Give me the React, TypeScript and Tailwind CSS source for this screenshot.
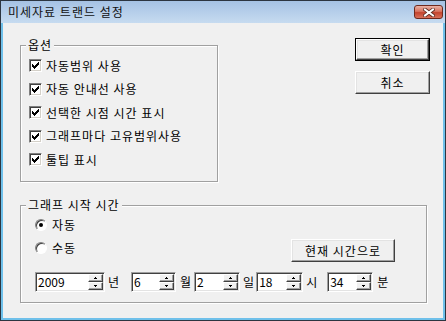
import React from "react";

const options = [
  "자동범위 사용",
  "자동 안내선 사용",
  "선택한 시점 시간 표시",
  "그래프마다 고유범위사용",
  "툴팁 표시",
];

const checkPixels: [number, number, number][] = [
  // y, x start, length
  [0, 6, 1],
  [1, 5, 2],
  [2, 0, 1],
  [2, 4, 3],
  [3, 0, 2],
  [3, 3, 3],
  [4, 0, 5],
  [5, 1, 3],
  [6, 2, 1],
];

const CheckBox = () => (
  <span className="w-[13px] h-[13px] flex-none flex items-center justify-center bg-white border border-t-[#808080] border-l-[#808080] border-r-white border-b-white shadow-[inset_1px_1px_0_#404040,inset_-1px_-1px_0_#d4d0c8]">
    <svg width="7" height="7" viewBox="0 0 7 7" shapeRendering="crispEdges">
      {checkPixels.map(([y, x, w], i) => (
        <rect key={i} x={x} y={y} width={w} height={1} fill="#000" />
      ))}
    </svg>
  </span>
);

const Radio = ({ on }: { on?: boolean }) => (
  <span className="w-[12px] h-[12px] flex-none rounded-full flex items-center justify-center bg-white border border-t-[#808080] border-l-[#808080] border-r-white border-b-white shadow-[inset_1px_1px_0_#404040]">
    {on && <span className="w-[4px] h-[4px] rounded-full bg-black" />}
  </span>
);

const Button = ({
  children,
  isDefault,
  className = "",
}: {
  children: React.ReactNode;
  isDefault?: boolean;
  className?: string;
}) => {
  const face = (
    <div className="flex-1 flex items-center justify-center bg-[#f0f0f0] border border-t-white border-l-white border-r-[#404040] border-b-[#404040] shadow-[inset_-1px_-1px_0_#a0a0a0,inset_1px_1px_0_#e3e3e3] leading-[14px]">
      {children}
    </div>
  );
  if (isDefault) {
    return <div className={`flex border border-black ${className}`}>{face}</div>;
  }
  return <div className={`flex ${className}`}>{face}</div>;
};

const SpinHalf = ({ up }: { up?: boolean }) => (
  <div className="h-[8px] flex items-center justify-center bg-[#f0f0f0] border border-t-white border-l-white border-r-[#404040] border-b-[#404040] shadow-[inset_-1px_-1px_0_#a0a0a0]">
    <svg width="3" height="2" viewBox="0 0 3 2" shapeRendering="crispEdges">
      {up ? (
        <>
          <rect x="1" y="0" width="1" height="1" fill="#000" />
          <rect x="0" y="1" width="3" height="1" fill="#000" />
        </>
      ) : (
        <>
          <rect x="0" y="0" width="3" height="1" fill="#000" />
          <rect x="1" y="1" width="1" height="1" fill="#000" />
        </>
      )}
    </svg>
  </div>
);

const SpinEdit = ({ value, className }: { value: string; className: string }) => (
  <div
    className={`h-[20px] flex bg-white border border-t-[#a0a0a0] border-l-[#a0a0a0] border-r-white border-b-white shadow-[inset_1px_1px_0_#404040,inset_-1px_-1px_0_#e3e3e3] p-[1px] ${className}`}
  >
    <span className="flex-1 pl-[1px] leading-[16px] tracking-normal">{value}</span>
    <div className="w-[15px] flex flex-col">
      <SpinHalf up />
      <SpinHalf />
    </div>
  </div>
);

const CloseButton = () => (
  <div className="w-[29px] h-[14px] rounded-[3px] border border-[#6e2a1e] bg-[linear-gradient(to_bottom,#eab3a6,#d7735f_45%,#c4452f_55%,#d8705a)] flex items-center justify-center">
    <svg width="12" height="9" viewBox="0 0 12 9">
      <path d="M2 1.5 L10 7.5 M10 1.5 L2 7.5" stroke="#5b2a20" strokeWidth="3.6" strokeLinecap="square" />
      <path d="M2 1.5 L10 7.5 M10 1.5 L2 7.5" stroke="#ffffff" strokeWidth="2" strokeLinecap="square" />
    </svg>
  </div>
);

export default function App() {
  return (
    <div className="w-[446px] h-[321px] flex flex-col border border-[#2c3540] bg-[#6fc0ea] font-['Noto_Sans_CJK_KR',sans-serif] text-[12px] tracking-[1px] text-black">
      <div className="h-[22px] flex items-center justify-between pl-[7px] pr-[2px] bg-[linear-gradient(to_bottom,#a5c2e4,#c6dbf0)]">
        <span className="leading-[14px] text-[#111]">미세자료 트랜드 설정</span>
        <CloseButton />
      </div>

      <div className="flex-1 flex px-[2px] pb-[2px]">
        <div className="flex-1 flex flex-col bg-[#f0f0f0] pl-[17px] pt-[15px]">
          <div className="flex">
            <fieldset className="w-[198px] h-[144px] border border-[#a0a0a0] shadow-[inset_1px_1px_0_#fff,1px_1px_0_#fff]">
              <legend className="ml-[5px] px-[2px] leading-[14px] bg-[#f0f0f0]">옵션</legend>
              <div className="pl-[8px] pt-[2px]">
                {options.map((o) => (
                  <div key={o} className="h-[23.5px] flex items-center gap-[4px]">
                    <CheckBox />
                    <span className="leading-[14px]">{o}</span>
                  </div>
                ))}
              </div>
            </fieldset>

            <div className="ml-auto mr-[13px] flex flex-col gap-[10px]">
              <Button isDefault className="w-[75px] h-[23px]">
                확인
              </Button>
              <Button className="w-[75px] h-[23px]">취소</Button>
            </div>
          </div>

          <fieldset className="mt-[16px] w-[407px] h-[105px] border border-[#a0a0a0] shadow-[inset_1px_1px_0_#fff,1px_1px_0_#fff]">
            <legend className="ml-[5px] px-[2px] leading-[14px] bg-[#f0f0f0]">그래프 시작 시간</legend>
            <div className="pt-[1px] flex flex-col">
              <div className="h-[23px] pl-[14px] flex items-center gap-[5px]">
                <Radio on />
                <span className="leading-[14px]">자동</span>
              </div>
              <div className="flex items-start pl-[14px] pr-[31px]">
                <div className="h-[23px] flex items-center gap-[5px]">
                  <Radio />
                  <span className="leading-[14px]">수동</span>
                </div>
                <Button className="ml-auto mt-[3px] w-[104px] h-[23px]">현재 시간으로</Button>
              </div>
              <div className="mt-[10px] pl-[14px] flex items-center">
                <SpinEdit value="2009" className="w-[70px]" />
                <span className="ml-[3px] leading-[14px]">년</span>
                <SpinEdit value="6" className="ml-[11px] w-[45px]" />
                <span className="ml-[4px] leading-[14px]">월</span>
                <SpinEdit value="2" className="ml-[2px] w-[46px]" />
                <span className="ml-[3px] leading-[14px]">일</span>
                <SpinEdit value="18" className="ml-[1px] w-[47px]" />
                <span className="ml-[3px] leading-[14px]">시</span>
                <SpinEdit value="34" className="ml-[9px] w-[46px]" />
                <span className="ml-[4px] leading-[14px]">분</span>
              </div>
            </div>
          </fieldset>
        </div>
      </div>
    </div>
  );
}
